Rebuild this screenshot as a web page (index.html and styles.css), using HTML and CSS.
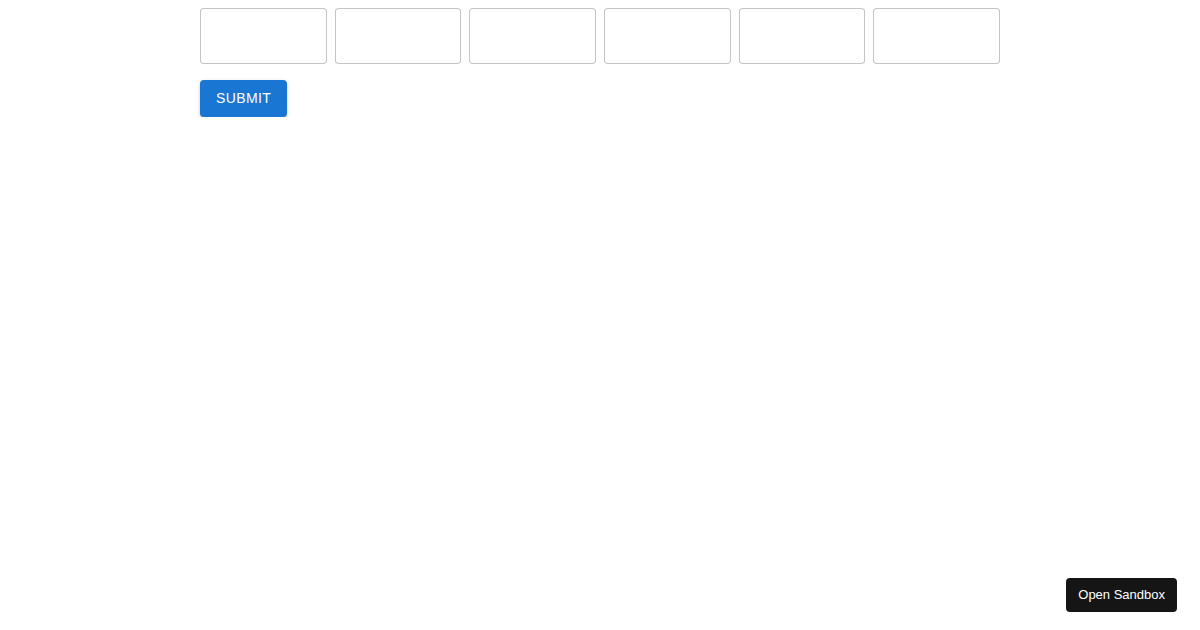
FILE: index.html
```html
<!DOCTYPE html>
<html>
<head>
<meta charset="utf-8">
<link rel="stylesheet" href="styles.css">
</head>
<body>
<div class="wrap">
  <div class="fields">
    <div class="field"></div>
    <div class="field"></div>
    <div class="field"></div>
    <div class="field"></div>
    <div class="field"></div>
    <div class="field"></div>
  </div>
  <button class="submit">Submit</button>
</div>
<a class="sandbox">Open Sandbox</a>
</body>
</html>
```
FILE: styles.css
```css
html, body { margin: 0; padding: 0; background: #fff; }
body { padding-top: 8px; font-family: "Liberation Sans", Arial, sans-serif; }
.wrap { width: 800px; margin: 0 auto; }
.fields { display: grid; grid-template-columns: repeat(6, 1fr); gap: 8px; }
.field { height: 56px; box-sizing: border-box; border: 1px solid rgba(0,0,0,0.23); border-radius: 4px; background: #fff; }
.submit {
  margin-top: 16px;
  display: inline-block;
  font-family: "Liberation Sans", Arial, sans-serif;
  font-weight: 400;
  font-size: 14px;
  line-height: 1.75;
  letter-spacing: 0.02857em;
  text-transform: uppercase;
  color: #fff;
  background: #1976d2;
  border: 0;
  border-radius: 4px;
  padding: 6px 16px;
  box-shadow: 0 3px 1px -2px rgba(0,0,0,0.2), 0 2px 2px 0 rgba(0,0,0,0.14), 0 1px 5px 0 rgba(0,0,0,0.12);
}
.sandbox {
  position: fixed;
  right: 23px;
  bottom: 18px;
  background: #151515;
  color: #fff;
  font-family: "Liberation Sans", Arial, sans-serif;
  font-size: 13px;
  line-height: 34px;
  height: 34px;
  padding: 0 12px;
  border-radius: 4px;
}
```
